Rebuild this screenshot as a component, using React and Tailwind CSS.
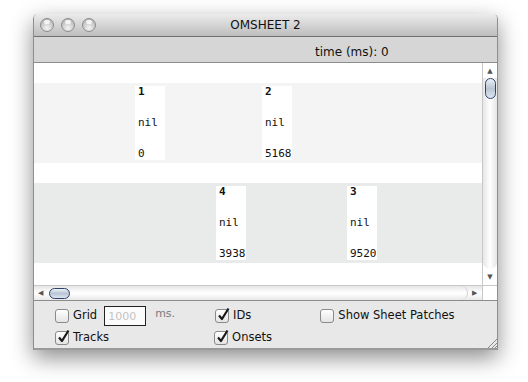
import React from 'react';

const ui = { fontFamily: '"DejaVu Sans", "Liberation Sans", sans-serif' };
const mono = { fontFamily: '"DejaVu Sans Mono", "Liberation Mono", monospace' };

const Light = () => (
    <div className="w-[14px] h-[14px] rounded-full border border-[#8d8d8d] bg-[radial-gradient(circle_at_50%_75%,#f4f4f4_0%,#c9c9c9_55%,#a9a9a9_100%)] relative">
        <div className="absolute left-[3px] top-[1px] w-[6px] h-[4px] rounded-full bg-white/80" />
    </div>
);

const Cell = ({ id, value, left }) => (
    <div
        className="absolute top-[3px] w-[30px] h-[74px] bg-white flex flex-col justify-between pl-[3px] text-[11px] leading-[12px] text-[#111]"
        style={{ left, ...mono }}
    >
        <span className="font-bold">{id}</span>
        <span>nil</span>
        <span>{value}</span>
    </div>
);

const Check = ({ checked }) => (
    <div className="relative w-[14px] h-[14px] rounded-[3px] border border-[#8a8a8a] bg-gradient-to-b from-white to-[#e4e4e4] shrink-0">
        {checked && (
            <svg viewBox="0 0 14 14" className="absolute left-[1px] -top-[3px] w-[14px] h-[15px] overflow-visible">
                <path d="M2 8 L5 11.5 L11.5 1" fill="none" stroke="#1a1a1a" strokeWidth="2.2" strokeLinejoin="round" />
            </svg>
        )}
    </div>
);

const Option = ({ label, checked, className = '' }) => (
    <div className={`flex items-center gap-[4px] ${className}`}>
        <Check checked={checked} />
        <span className="text-[11.5px] text-[#111]">{label}</span>
    </div>
);

const Thumb = ({ vertical }) => (
    <div
        className={`${vertical ? 'w-[11px] h-[21px]' : 'w-[21px] h-[11px]'} rounded-full border border-[#2d4368] bg-gradient-to-b from-[#eef3f8] via-[#b7c5d4] to-[#dfe7ef]`}
    />
);

export default function App() {
    return (
        <div className="w-[528px] h-[382px] bg-white pt-[14px] pl-[33px]" style={ui}>
            <div className="w-[465px] h-[336px] rounded-t-[5px] overflow-hidden flex flex-col shadow-[0_8px_22px_rgba(0,0,0,0.45)] border-x border-[#8e8e8e]">
                {/* title bar */}
                <div className="h-[23px] shrink-0 grid grid-cols-[1fr_auto_1fr] items-center bg-gradient-to-b from-[#ececec] to-[#bdbdbd] border-b border-[#6f6f6f]">
                    <div className="flex gap-[7px] pl-[6px]">
                        <Light />
                        <Light />
                        <Light />
                    </div>
                    <span className="text-[12px] text-[#111]">OMSHEET 2</span>
                    <div />
                </div>

                {/* toolbar */}
                <div className="h-[26px] shrink-0 bg-[#d6d6d6] border-b border-[#8c8c8c] flex items-center pt-[4px] pl-[281px]">
                    <span className="text-[12px] text-[#111]">time (ms): 0</span>
                </div>

                {/* content */}
                <div className="h-[222px] shrink-0 flex">
                    <div className="flex-1 bg-white pt-[20px] flex flex-col gap-[20px]">
                        <div className="relative h-[80px] bg-[#f4f4f4]">
                            <Cell id="1" value="0" left={101} />
                            <Cell id="2" value="5168" left={228} />
                        </div>
                        <div className="relative h-[80px] bg-[#e9eaea]">
                            <Cell id="4" value="3938" left={182} />
                            <Cell id="3" value="9520" left={313} />
                        </div>
                    </div>
                    <div className="w-[15px] border-l border-[#c8c8c8] bg-white flex flex-col items-center">
                        <div className="h-[15px] flex items-center text-[7px] text-[#555] pt-[2px]">▲</div>
                        <div className="flex-1 w-full rounded-b-full bg-gradient-to-r from-[#e6e6e6] via-white to-[#e6e6e6] flex justify-center">
                            <Thumb vertical />
                        </div>
                        <div className="h-[16px] flex items-center text-[7px] text-[#555]">▼</div>
                    </div>
                </div>

                {/* horizontal scrollbar */}
                <div className="h-[15px] shrink-0 flex border-t border-[#c8c8c8]">
                    <div className="flex-1 flex items-center bg-gradient-to-b from-[#e6e6e6] via-white to-[#e9e9e9]">
                        <span className="text-[7px] text-[#555] pl-[4px] w-[15px]">◀</span>
                        <Thumb />
                        <div className="flex-1" />
                        <div className="h-full w-[8px] rounded-r-full border-r border-[#cfcfcf]" />
                        <span className="text-[7px] text-[#555] w-[14px] pl-[4px]">▶</span>
                    </div>
                    <div className="w-[15px] bg-white border-l border-[#c8c8c8]" />
                </div>

                {/* options panel */}
                <div className="h-[50px] shrink-0 relative bg-[#e8e8e8] border-t border-[#8c8c8c] border-b-2 border-b-[#9a9a9a] pl-[21px] pt-[5px]">
                    <div className="flex items-center h-[20px]">
                        <Option label="Grid" />
                        <div className="ml-[7px] w-[42px] h-[20px] border border-[#222] bg-[#fbfbfb] text-[11px] text-[#c4c4c4] pl-[3px] pt-[2px]">1000</div>
                        <span className="ml-[9px] text-[11px] text-[#7a7a7a] -mt-[3px]">ms.</span>
                        <Option label="IDs" checked className="ml-[40px]" />
                        <Option label="Show Sheet Patches" className="ml-[69px]" />
                    </div>
                    <div className="flex items-center h-[20px] mt-[2px]">
                        <Option label="Tracks" checked />
                        <Option label="Onsets" checked className="ml-[105px]" />
                    </div>
                    <svg viewBox="0 0 12 12" className="absolute right-0 bottom-0 w-[12px] h-[12px]">
                        <path d="M3 12 L12 3 M7 12 L12 7 M10 12 L12 10" stroke="#888" strokeWidth="1" />
                    </svg>
                </div>
            </div>
        </div>
    );
}
